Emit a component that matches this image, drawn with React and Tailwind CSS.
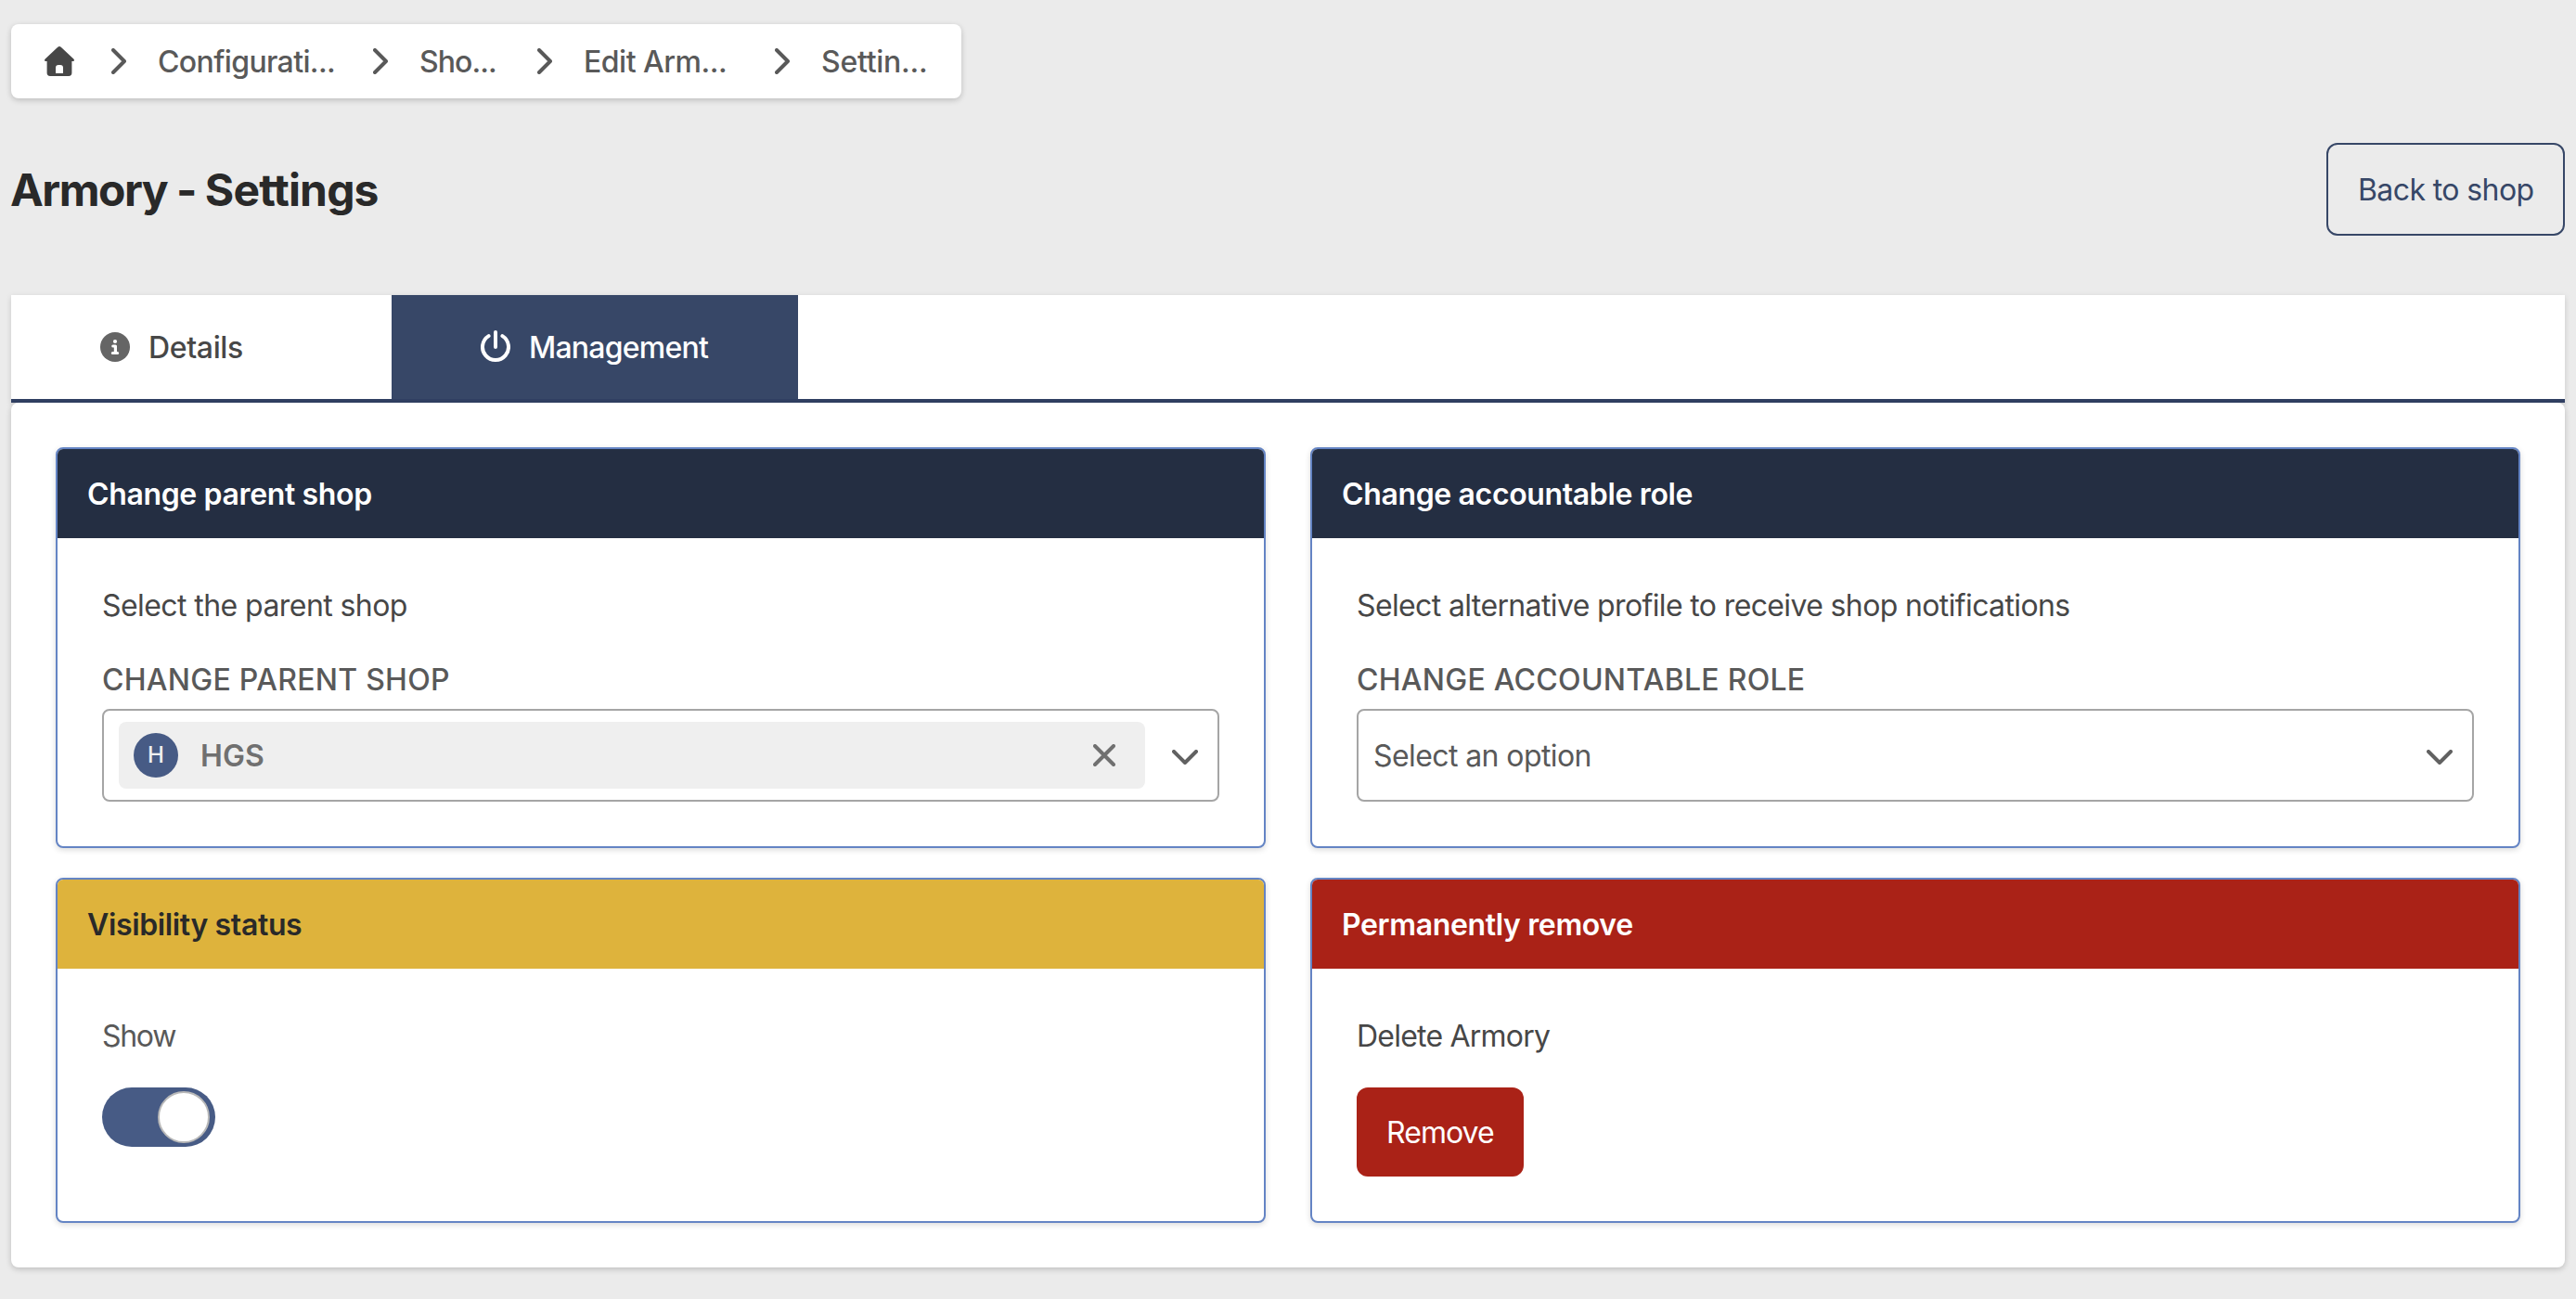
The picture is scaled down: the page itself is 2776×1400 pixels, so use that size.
import { Fragment, useState } from 'react';
import clsx from 'clsx';

/* Icons */
function HomeIcon() {
  return (
    <svg width="32" height="32" viewBox="0 0 32 32" className="shrink-0 fill-[#474747]">
      <path
        fillRule="evenodd"
        d="M14.3.8a2.5 2.5 0 0 1 3.4 0l13.6 12.6c1.3 1.3.7 2.6-.9 2.6h-1v12.6a3.4 3.4 0 0 1-3.4 3.4H6a3.4 3.4 0 0 1-3.4-3.4V16h-1C0 16-.6 14.7.7 13.4ZM12 29h8v-6a3 3 0 0 0-3-3h-2a3 3 0 0 0-3 3Z"
      />
    </svg>
  );
}

function ChevronRight() {
  return (
    <svg width="16" height="28" viewBox="0 0 16 28" className="shrink-0 stroke-[#595959]" fill="none" strokeWidth="4" strokeLinecap="round" strokeLinejoin="round">
      <path d="M2 2 14 14 2 26" />
    </svg>
  );
}

function ChevronDown() {
  return (
    <svg width="28" height="16" viewBox="0 0 28 16" className="mt-1 shrink-0 stroke-[#616161]" fill="none" strokeWidth="4" strokeLinecap="round" strokeLinejoin="round">
      <path d="M2 2 14 14 26 2" />
    </svg>
  );
}

function CloseIcon() {
  return (
    <svg width="24" height="24" viewBox="0 0 24 24" className="shrink-0 stroke-[#707070]" fill="none" strokeWidth="4" strokeLinecap="round">
      <path d="M2 2 22 22M22 2 2 22" />
    </svg>
  );
}

function InfoIcon() {
  return (
    <svg width="32" height="32" viewBox="0 0 32 32" className="shrink-0">
      <circle cx="16" cy="16" r="16" className="fill-[#656565]" />
      <circle cx="16" cy="10" r="2.1" fill="#fff" />
      <path d="M13.8 15H16.4V22.5M13.4 22.5H18.6" fill="none" stroke="#fff" strokeWidth="3.2" strokeLinecap="round" strokeLinejoin="round" />
    </svg>
  );
}

function PowerIcon() {
  return (
    <svg width="32" height="36" viewBox="0 -2 32 36" className="shrink-0" fill="none" stroke="#fff" strokeWidth="4" strokeLinecap="round">
      <path d="M16 0V16M8.6 4.1A14 14 0 1 0 23.4 4.1" />
    </svg>
  );
}

const crumbs = [
  { label: 'Configurati...', width: 'w-[192px]', spacing: 'tracking-[-0.63px]' },
  { label: 'Sho...', width: 'w-[87px]', spacing: 'tracking-[-0.93px]' },
  { label: 'Edit Arm...', width: 'w-[166px]', spacing: 'tracking-[-0.49px]' },
  { label: 'Settin...', width: 'w-[111px]', spacing: 'tracking-[-0.26px]' },
];

function Breadcrumb() {
  return (
    <nav className="flex h-20 w-[1024px] items-center rounded-lg bg-white pl-9 font-medium text-[#595959] shadow-[0_2px_6px_rgba(0,0,0,0.2)]">
      <HomeIcon />
      {crumbs.map((crumb) => (
        <Fragment key={crumb.label}>
          <span className="ml-10 flex"><ChevronRight /></span>
          <a className={clsx('ml-[34px] shrink-0 pt-0.5 whitespace-nowrap', crumb.width, crumb.spacing)}>{crumb.label}</a>
        </Fragment>
      ))}
    </nav>
  );
}

function Card({ title, headerClass, children }) {
  return (
    <section className="overflow-hidden rounded-lg border-2 border-[#6484c4] bg-white shadow-[0_2px_6px_rgba(0,0,0,0.15)]">
      <h2 className={clsx('flex h-24 items-center px-8 pt-0.5 font-semibold tracking-[-0.36px]', headerClass)}>{title}</h2>
      <div className="p-12">{children}</div>
    </section>
  );
}

function FieldLabel({ children }) {
  return <div className="mb-[7px] pt-px font-medium tracking-[0.27px] text-[#595959]">{children}</div>;
}

function Toggle() {
  const [on, setOn] = useState(true);
  return (
    <button
      type="button"
      role="switch"
      aria-checked={on}
      aria-label="Show"
      onClick={() => setOn(!on)}
      className={clsx('flex h-16 w-[122px] items-center rounded-full px-1.5', on ? 'justify-end bg-[#475b85]' : 'justify-start bg-[#a5a5a5]')}
    >
      <span className="size-14 rounded-full border-2 border-[#b8b8b8] bg-white" />
    </button>
  );
}

export default function App() {
  return (
    <div className="h-[1400px] w-[2776px] overflow-hidden bg-[#ebebeb] px-3 pt-[26px] font-[Inter,sans-serif] text-[32px] leading-[48px] text-[#474747]">
      <Breadcrumb />

      <header className="mt-12 flex h-[100px] items-center justify-between">
        <h1 className="-ml-px pt-0.5 text-[48px] leading-[72px] font-bold tracking-[-1.5px] text-[#292929]">
          Armory - <span className="tracking-[-0.85px]">Settings</span>
        </h1>
        <button type="button" className="h-full w-[257px] rounded-xl border-2 border-[#374767] pt-0.5 pl-8 text-left tracking-[-0.6px] text-[#374767]">
          Back to shop
        </button>
      </header>

      <div className="mt-16 flex h-[116px] border-b-4 border-[#314063] bg-white font-medium shadow-[0_2px_6px_rgba(0,0,0,0.15)]">
        <button type="button" className="flex w-[410px] items-center gap-5 pl-24 tracking-[-0.37px]">
          <InfoIcon />
          <span className="pt-0.5">Details</span>
        </button>
        <button type="button" className="flex w-[438px] items-center gap-5 bg-[#374767] pl-24 tracking-[-0.77px] text-white">
          <PowerIcon />
          <span className="pt-0.5">Management</span>
        </button>
      </div>

      <main className="grid grid-cols-2 gap-x-12 gap-y-8 rounded-lg bg-white p-12 shadow-[0_2px_6px_rgba(0,0,0,0.2)]">
        <Card title="Change parent shop" headerClass="bg-[#242e42] text-white">
          <p className="mb-[31px] pt-px tracking-[-0.57px]">Select the parent shop</p>
          <FieldLabel>CHANGE PARENT SHOP</FieldLabel>
          <div className="flex h-[100px] items-center justify-between rounded-lg border-2 border-[#a5a5a5] pr-[21px] pl-4">
            <div className="flex h-[72px] w-[1106px] items-center rounded-lg bg-[#efefef] pr-8 pl-4">
              <span className="flex size-12 items-center justify-center rounded-full bg-[#475b85] text-2xl font-medium text-[#efefef]">H</span>
              <span className="ml-6 flex-1 pt-0.5 font-semibold tracking-[0.09px] text-[#707070]">HGS</span>
              <CloseIcon />
            </div>
            <ChevronDown />
          </div>
        </Card>

        <Card title="Change accountable role" headerClass="bg-[#242e42] text-white">
          <p className="mb-[31px] pt-px tracking-[-0.63px]">Select alternative profile to receive shop notifications</p>
          <FieldLabel>CHANGE ACCOUNTABLE ROLE</FieldLabel>
          <div className="flex h-[100px] items-center justify-between rounded-lg border-2 border-[#a5a5a5] pr-[21px] pl-4">
            <span className="pt-0.5 tracking-[-0.59px] text-[#595959]">Select an option</span>
            <ChevronDown />
          </div>
        </Card>

        <Card title="Visibility status" headerClass="bg-[#deb33c] text-[#292929]">
          <p className="mb-[31px] pt-px tracking-[-1.3px] text-[#595959]">Show</p>
          <Toggle />
        </Card>

        <Card title="Permanently remove" headerClass="bg-[#aa2217] text-white">
          <p className="mb-[31px] pt-px tracking-[-0.78px]">Delete Armory</p>
          <button type="button" className="block h-24 w-[180px] rounded-xl bg-[#aa2217] pt-0.5 pl-8 text-left tracking-[-0.95px] text-white">
            Remove
          </button>
        </Card>
      </main>
    </div>
  );
}
